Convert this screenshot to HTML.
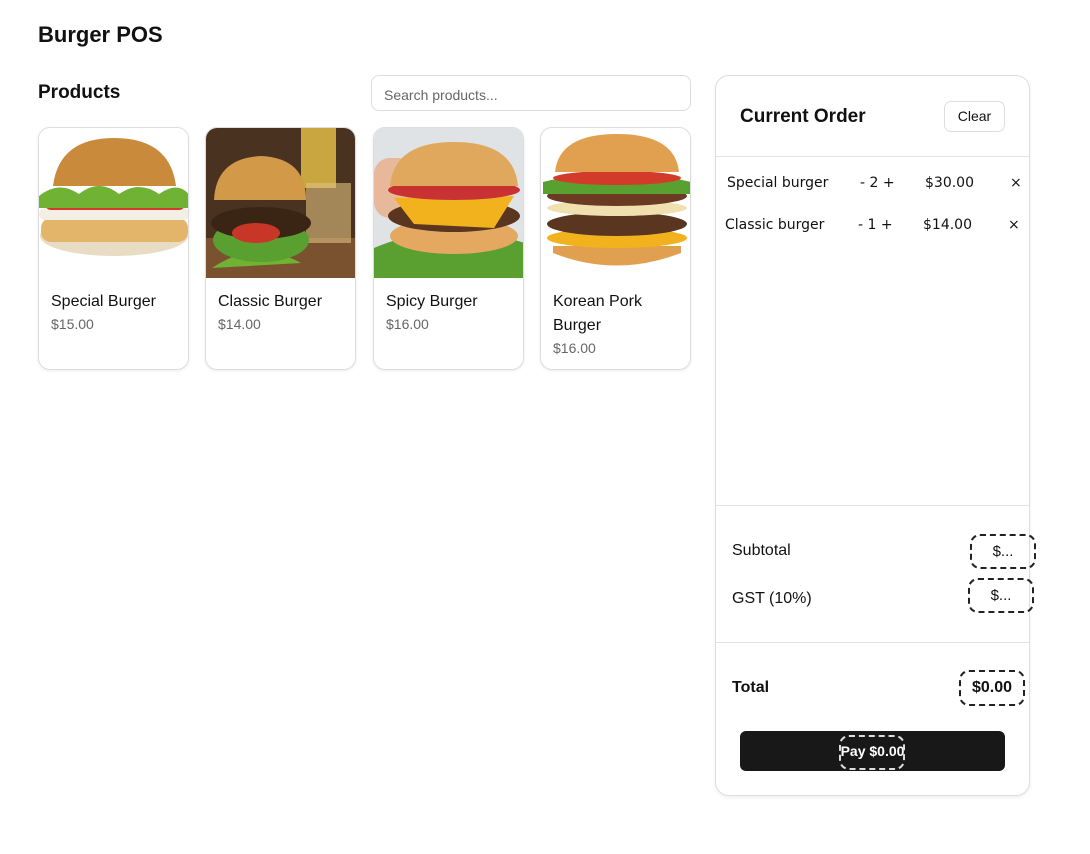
<!DOCTYPE html>
<html><head><meta charset="utf-8"><style>
*{box-sizing:border-box;margin:0;padding:0}
body{width:1090px;height:854px;background:#fff;font-family:"Liberation Sans",Arial,sans-serif;color:#111;position:relative;overflow:hidden}
h1{position:absolute;left:38px;top:22px;font-size:22px;font-weight:bold}
.ph{position:absolute;left:38px;top:82px;font-size:19px;font-weight:bold}
.search{position:absolute;left:371px;top:75px;width:320px;height:36px;border:1px solid #ddd;border-radius:8px;font-size:14px;color:#666;padding:11px 12px}
.card{position:absolute;top:127px;width:151px;height:243px;border:1px solid #ddd;border-radius:12px;overflow:hidden;box-shadow:0 1px 3px rgba(0,0,0,.08)}
.card svg{display:block;width:151px;height:150px}
.nm{position:absolute;left:12px;top:162px;font-size:16px;line-height:24px;color:#111}
.pr{font-size:14px;color:#666;line-height:20px}
.panel{position:absolute;left:715px;top:75px;width:315px;height:721px;border:1px solid #ddd;border-radius:14px;box-shadow:0 2px 4px rgba(0,0,0,.06)}
.co{position:absolute;left:24px;top:30px;font-size:19px;font-weight:bold}
.clear{position:absolute;left:228px;top:25px;width:61px;height:31px;border:1px solid #ddd;border-radius:7px;font-size:14px;text-align:center;line-height:29px}
.hr{position:absolute;left:0;width:313px;height:1px;background:#e3e3e3}
.it{position:absolute;font-family:"DejaVu Sans",sans-serif;font-size:14px;color:#111}
.lbl{position:absolute;left:16px;font-size:16px}
.dash{position:absolute;border:2px dashed #222;border-radius:10px;font-size:15px;text-align:center}
.pay{position:absolute;left:24px;top:655px;width:265px;height:40px;background:#181818;border-radius:6px;color:#fff;font-size:14px;font-weight:bold;text-align:center;line-height:40px}
</style></head><body>
<h1>Burger POS</h1>
<div class="ph">Products</div>
<div class="search">Search products...</div>

<div class="card" style="left:38px"><svg viewBox="0 0 151 150"><rect width="151" height="150" fill="#fff"/><ellipse cx="75" cy="108" rx="74" ry="20" fill="#e8dcc4"/><rect x="2" y="90" width="147" height="24" rx="10" fill="#e3b56a"/><rect x="0" y="80" width="151" height="12" rx="6" fill="#f3efe4"/><rect x="6" y="70" width="140" height="12" rx="6" fill="#d23a2a"/><path d="M0 68 Q20 52 40 66 Q60 50 80 66 Q100 52 120 66 Q140 52 151 68 L151 80 L0 80Z" fill="#6fb234"/><path d="M14 58 Q20 10 75 10 Q131 10 137 58Z" fill="#c98a3c"/></svg>
<div class="nm">Special Burger<div class="pr">$15.00</div></div></div>

<div class="card" style="left:205px"><svg viewBox="0 0 151 150"><rect width="151" height="150" fill="#4a3220"/><rect y="110" width="151" height="40" fill="#7a5230"/><rect x="95" y="0" width="35" height="60" fill="#c9a640"/><rect x="100" y="55" width="45" height="60" fill="#e0c080" opacity=".6"/><path d="M6 140 Q50 110 95 135" fill="#6fb234"/><ellipse cx="55" cy="112" rx="48" ry="22" fill="#5aa030"/><ellipse cx="55" cy="95" rx="50" ry="16" fill="#3a2414"/><ellipse cx="50" cy="105" rx="24" ry="10" fill="#c83628"/><path d="M8 72 Q10 30 55 28 Q100 30 100 72Z" fill="#d29a48"/></svg>
<div class="nm">Classic Burger<div class="pr">$14.00</div></div></div>

<div class="card" style="left:373px"><svg viewBox="0 0 151 150"><rect width="151" height="150" fill="#dfe3e6"/><rect x="0" y="30" width="40" height="60" rx="16" fill="#e8b89a"/><path d="M0 120 Q70 90 151 115 L151 150 L0 150Z" fill="#5aa030"/><ellipse cx="80" cy="108" rx="64" ry="18" fill="#e4a860"/><ellipse cx="80" cy="88" rx="66" ry="16" fill="#5a3520"/><path d="M20 70 L140 68 L120 100 L40 96Z" fill="#f2b21e"/><ellipse cx="80" cy="62" rx="66" ry="10" fill="#c83232"/><path d="M16 58 Q20 14 80 14 Q140 14 144 58Z" fill="#e0a85c"/></svg>
<div class="nm">Spicy Burger<div class="pr">$16.00</div></div></div>

<div class="card" style="left:540px"><svg viewBox="0 0 151 150"><rect width="151" height="150" fill="#fff"/><path d="M12 125 Q75 150 140 125 L140 118 L12 118Z" fill="#e0a050"/><ellipse cx="76" cy="110" rx="70" ry="10" fill="#f2b21e"/><ellipse cx="76" cy="96" rx="70" ry="12" fill="#5a3520"/><ellipse cx="76" cy="80" rx="70" ry="8" fill="#f0e0b0"/><ellipse cx="76" cy="68" rx="70" ry="10" fill="#6a3a22"/><path d="M2 54 Q40 44 76 54 Q112 44 150 54 L150 66 L2 66Z" fill="#5aa030"/><ellipse cx="76" cy="50" rx="64" ry="7" fill="#d23a2a"/><path d="M14 44 Q18 6 76 6 Q134 6 138 44Z" fill="#e0a050"/></svg>
<div class="nm">Korean Pork<br>Burger<div class="pr">$16.00</div></div></div>

<div class="panel">
<div class="co">Current Order</div>
<div class="clear">Clear</div>
<div class="hr" style="top:80px"></div>
<div class="it" style="left:11px;top:99px">Special burger</div>
<div class="it" style="left:144px;top:99px">- 2 +</div>
<div class="it" style="left:209px;top:99px">$30.00</div>
<div class="it" style="left:294px;top:99px">×</div>
<div class="it" style="left:9px;top:141px">Classic burger</div>
<div class="it" style="left:142px;top:141px">- 1 +</div>
<div class="it" style="left:207px;top:141px">$14.00</div>
<div class="it" style="left:292px;top:141px">×</div>
<div class="hr" style="top:429px"></div>
<div class="lbl" style="top:466px">Subtotal</div>
<div class="dash" style="left:254px;top:458px;width:66px;height:35px;line-height:31px">$...</div>
<div class="lbl" style="top:514px">GST (10%)</div>
<div class="dash" style="left:252px;top:502px;width:66px;height:35px;line-height:31px">$...</div>
<div class="hr" style="top:566px"></div>
<div class="lbl" style="top:603px;font-weight:bold">Total</div>
<div class="dash" style="left:243px;top:594px;width:66px;height:36px;line-height:32px;font-weight:bold;font-size:16px">$0.00</div>
<div class="pay">Pay $0.00</div>
<div class="dash" style="left:123px;top:659px;width:66px;height:35px;border-color:#ddd"></div>
</div>
</body></html>
